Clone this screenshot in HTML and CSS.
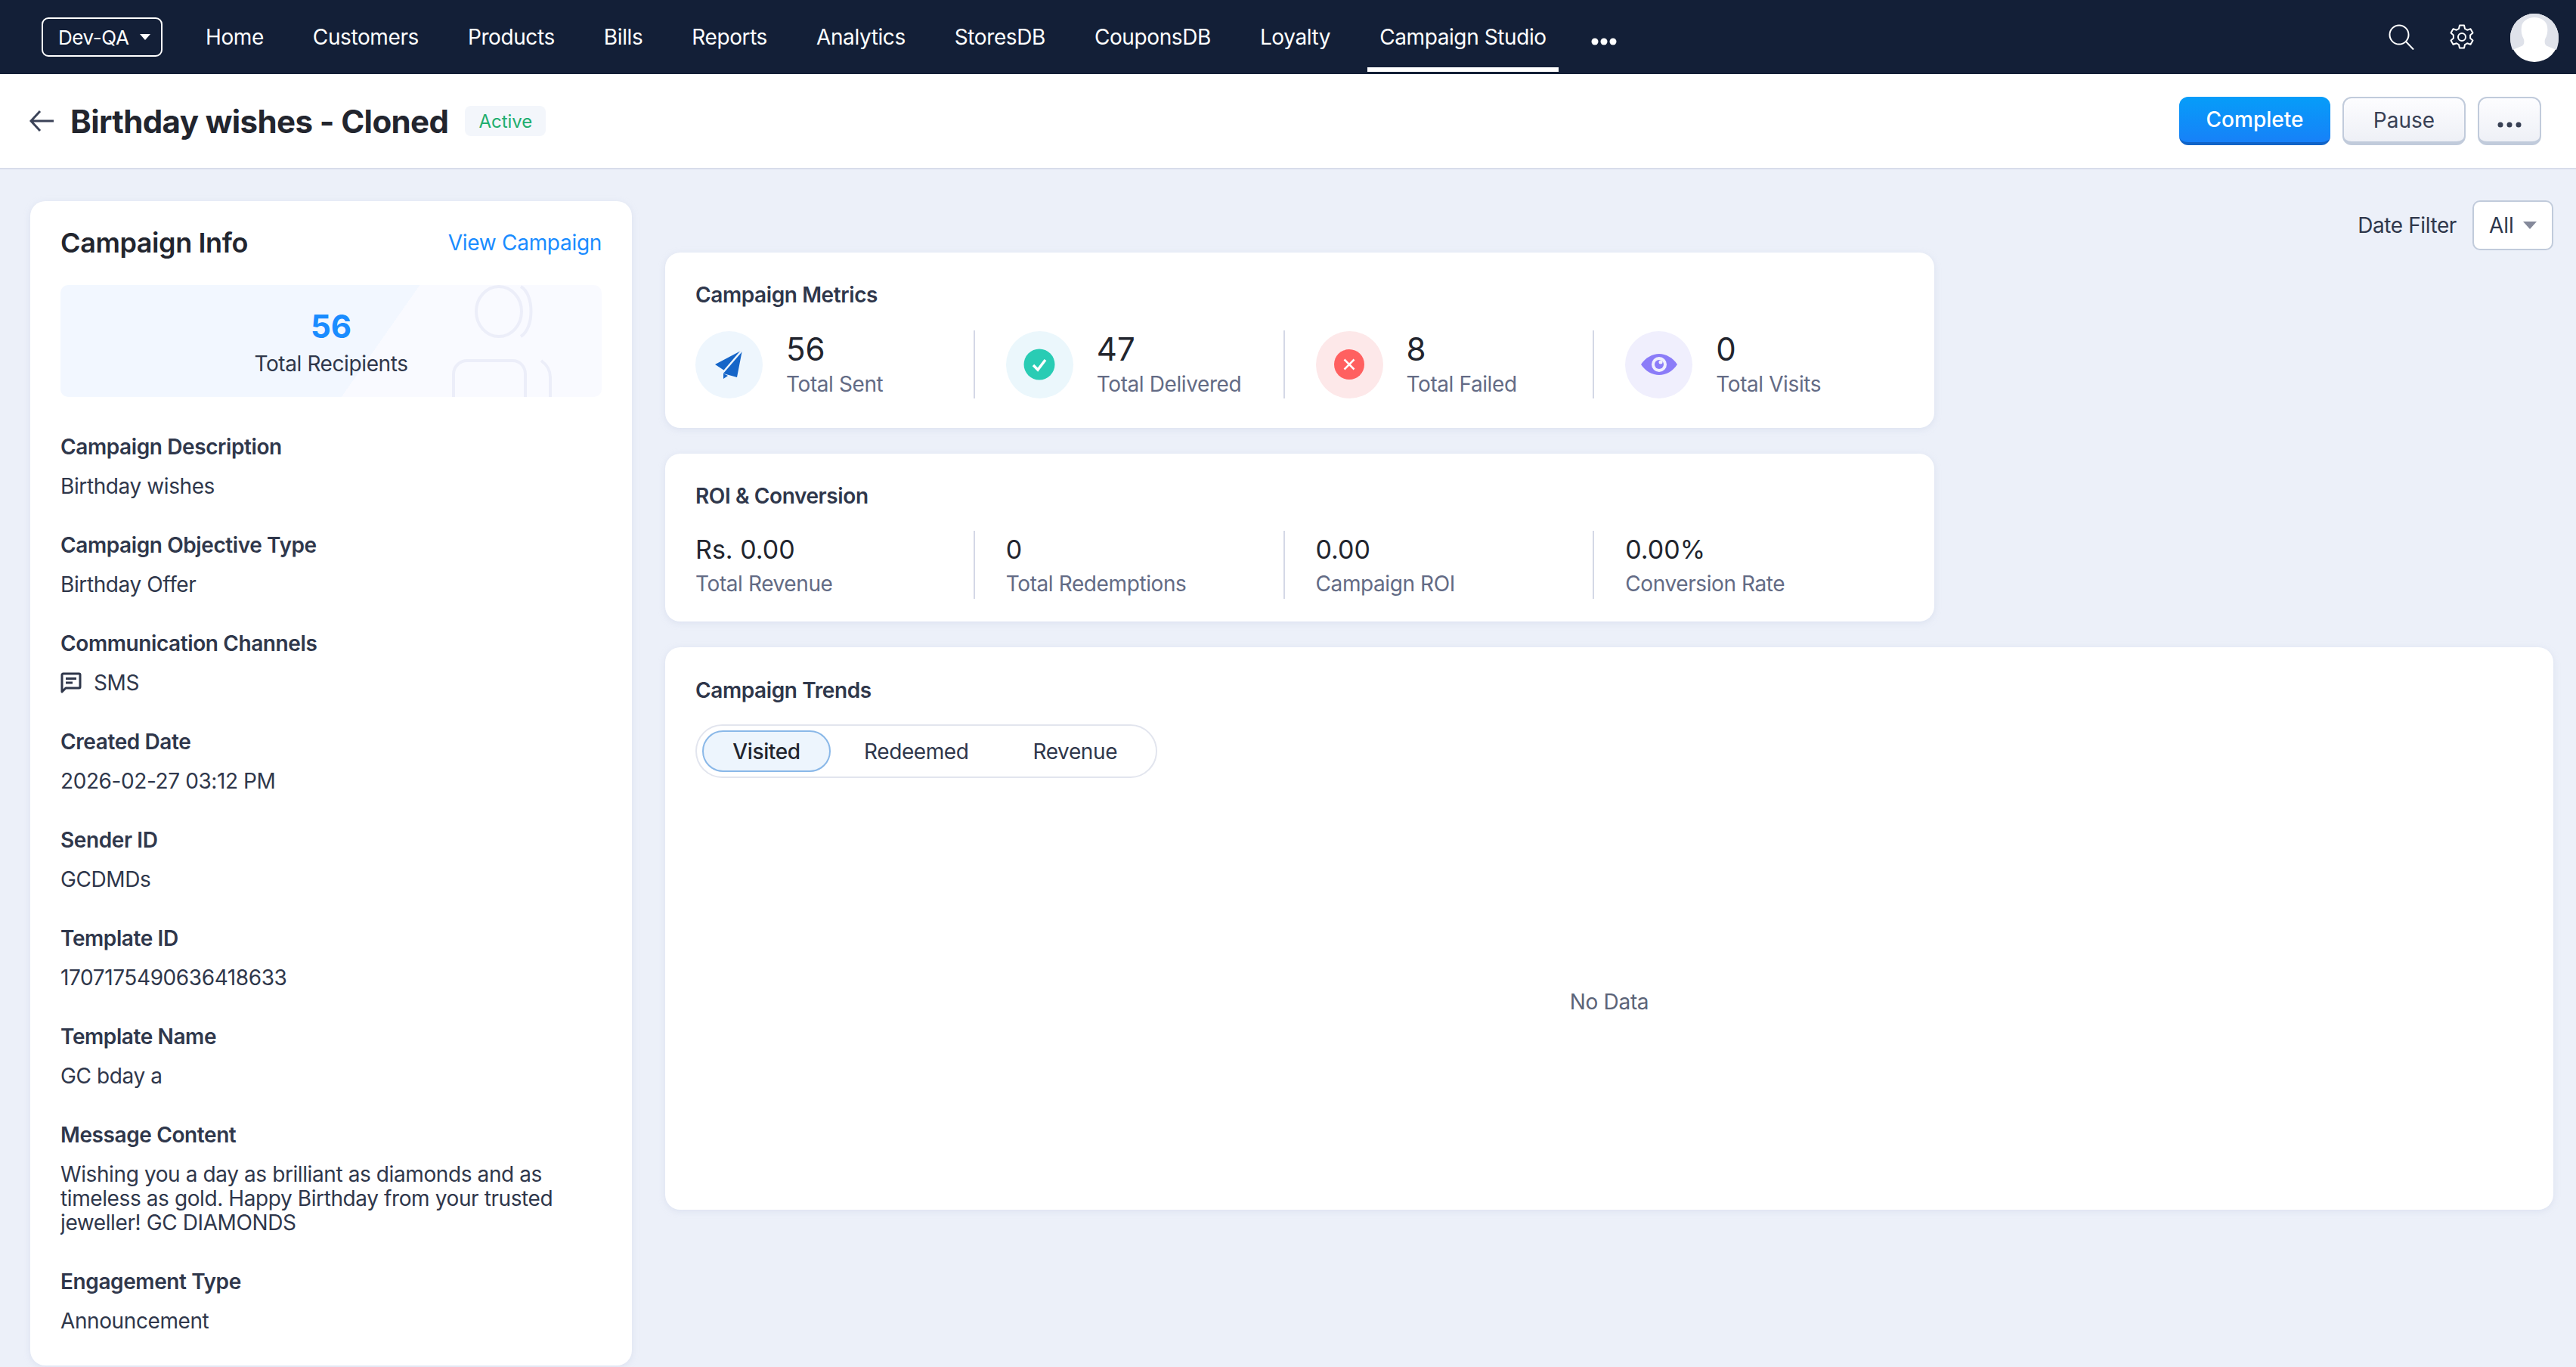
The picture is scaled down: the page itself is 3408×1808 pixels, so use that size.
FILE: index.html
```html
<!DOCTYPE html>
<html>
<head>
<meta charset="utf-8">
<title>Birthday wishes - Cloned</title>
<link rel="stylesheet" href="styles.css">
</head>
<body>
<nav class="topbar">
    <button class="org">Dev-QA <span class="org-caret"></span></button>
    <div class="nav-links">
        <a class="nav-item">Home</a>
        <a class="nav-item">Customers</a>
        <a class="nav-item">Products</a>
        <a class="nav-item">Bills</a>
        <a class="nav-item">Reports</a>
        <a class="nav-item">Analytics</a>
        <a class="nav-item">StoresDB</a>
        <a class="nav-item">CouponsDB</a>
        <a class="nav-item">Loyalty</a>
        <a class="nav-item active">Campaign Studio</a>
        <a class="nav-more">
            <svg width="34" height="10" viewBox="0 0 34 10"><circle cx="5" cy="5" r="4.5" fill="#fff"/><circle cx="17" cy="5" r="4.5" fill="#fff"/><circle cx="29" cy="5" r="4.5" fill="#fff"/></svg>
        </a>
    </div>
    <div class="top-icons">
        <svg class="ic-search" width="34" height="34" viewBox="0 0 34 34" fill="none" stroke="#fff" stroke-width="2"><circle cx="14" cy="14" r="12.5"/><path d="M23 23l10 10.500"/></svg>
        <svg class="ic-gear" width="32" height="34" viewBox="0 0 32 34" fill="none" stroke="#fff" stroke-width="2" stroke-linejoin="round"><path d="M13 1.500h6l1 4.500 3 1.700 4.500-1.400 3 5.200-3.400 3.100v3.800l3.400 3.100-3 5.200-4.500-1.400-3 1.700-1 4.500h-6l-1-4.500-3-1.700-4.500 1.400-3-5.200 3.400-3.100v-3.800l-3.400-3.100 3-5.200 4.500 1.400 3-1.700z"/><circle cx="16" cy="17" r="5"/></svg>
        <div class="avatar">
            <svg width="64" height="64" viewBox="0 0 64 64"><circle cx="32" cy="32" r="32" fill="#fff"/><path d="M0 32a32 32 0 0 1 64 0c0 6-1 11-3 16l-12-5c-3-1-4-5-3-9 3-5 4-11 3-17C48 10 41 5 32 5S16 10 15 17c-1 6 0 12 3 17 1 4 0 8-3 9L3 48C1 43 0 38 0 32z" fill="#dfe2ea"/></svg>
        </div>
    </div>
</nav>

<header class="pagehead">
    <svg class="back" width="32" height="30" viewBox="0 0 32 30" fill="none" stroke="#3b4358" stroke-width="3"><path d="M14 2L2 15l12 13M2 15h30"/></svg>
    <h1>Birthday wishes - Cloned</h1>
    <span class="badge">Active</span>
    <div class="actions">
        <button class="btn btn-primary">Complete</button>
        <button class="btn">Pause</button>
        <button class="btn btn-dots">
            <svg width="32" height="8" viewBox="0 0 32 8"><circle cx="4" cy="4" r="3.500" fill="#384054"/><circle cx="16" cy="4" r="3.500" fill="#384054"/><circle cx="28" cy="4" r="3.500" fill="#384054"/></svg>
        </button>
    </div>
</header>

<div class="content">
    <aside class="card info">
        <div class="info-head">
            <h2>Campaign Info</h2>
            <a class="link">View Campaign</a>
        </div>
        <div class="recipients">
            <svg class="recipients-art" width="200" height="150" viewBox="0 0 200 150" fill="none" stroke="#eceef9" stroke-width="4"><ellipse cx="99" cy="35" rx="30" ry="33"/><path d="M128 2c18 10 18 55 0 66"/><path d="M39 150v-32c0-10 8-18 18-18h60c10 0 17 8 17 18v32"/><path d="M155 100c8 6 12 12 12 22v28"/></svg>
            <div class="recipients-num">56</div>
            <div class="recipients-label">Total Recipients</div>
        </div>
        <div class="fields">
            <div class="field"><div class="field-label">Campaign Description</div><div class="field-value">Birthday wishes</div></div>
            <div class="field"><div class="field-label">Campaign Objective Type</div><div class="field-value">Birthday Offer</div></div>
            <div class="field">
                <div class="field-label">Communication Channels</div>
                <div class="field-value channel">
                    <svg width="28" height="28" viewBox="0 0 28 28" fill="none"><path d="M2 26V3.500C2 2.700 2.700 2 3.500 2h21c.8 0 1.500.7 1.500 1.500v16c0 .8-.7 1.500-1.500 1.500H7z" stroke="#2f374b" stroke-width="3" stroke-linejoin="round"/><path d="M7 8.500h14M7 14h9" stroke="#2f374b" stroke-width="3"/></svg>
                    SMS
                </div>
            </div>
            <div class="field"><div class="field-label">Created Date</div><div class="field-value">2026-02-27 03:12 PM</div></div>
            <div class="field"><div class="field-label">Sender ID</div><div class="field-value">GCDMDs</div></div>
            <div class="field"><div class="field-label">Template ID</div><div class="field-value">1707175490636418633</div></div>
            <div class="field"><div class="field-label">Template Name</div><div class="field-value">GC bday a</div></div>
            <div class="field"><div class="field-label">Message Content</div><div class="field-value">Wishing you a day as brilliant as diamonds and as timeless as gold. Happy Birthday from your trusted jeweller! GC DIAMONDS</div></div>
            <div class="field"><div class="field-label">Engagement Type</div><div class="field-value">Announcement</div></div>
        </div>
    </aside>

    <main class="right">
        <div class="filter">
            <span class="filter-label">Date Filter</span>
            <div class="select">All <span class="select-caret"></span></div>
        </div>

        <section class="card metrics">
            <h3>Campaign Metrics</h3>
            <div class="stat-row">
                <div class="stat">
                    <div class="stat-icon i-blue">
                        <svg width="37" height="38" viewBox="0 0 37 38"><path d="M36 0L0 19l13 8.500L11 31l18 5z" fill="#1565c8"/><path d="M11 31l6 3-6 4z" fill="#1565c8"/><path d="M36 0L11 29" stroke="#eef6fd" stroke-width="2.500" fill="none"/></svg>
                    </div>
                    <div><div class="stat-num">56</div><div class="stat-label">Total Sent</div></div>
                </div>
                <div class="stat">
                    <div class="stat-icon i-teal">
                        <svg width="42" height="42" viewBox="0 0 42 42"><circle cx="21" cy="21" r="20.500" fill="#29ccb4"/><path d="M13 22l6 6 10-13" stroke="#fff" stroke-width="3.500" fill="none"/></svg>
                    </div>
                    <div><div class="stat-num">47</div><div class="stat-label">Total Delivered</div></div>
                </div>
                <div class="stat">
                    <div class="stat-icon i-red">
                        <svg width="40" height="40" viewBox="0 0 40 40"><circle cx="20" cy="20" r="20" fill="#ff6060"/><path d="M13.500 13.500l13 13M26.500 13.500l-13 13" stroke="#fff" stroke-width="2.500"/></svg>
                    </div>
                    <div><div class="stat-num">8</div><div class="stat-label">Total Failed</div></div>
                </div>
                <div class="stat">
                    <div class="stat-icon i-purple">
                        <svg width="48" height="28" viewBox="0 0 48 28"><path d="M0 14C6 5 15 0 24 0s18 5 24 14c-6 9-15 14-24 14S6 23 0 14z" fill="#8b7cf8"/><circle cx="24" cy="14" r="10" fill="#f0effd"/><circle cx="24" cy="14" r="6" fill="#8b7cf8"/><circle cx="26" cy="11" r="2.500" fill="#f0effd"/></svg>
                    </div>
                    <div><div class="stat-num">0</div><div class="stat-label">Total Visits</div></div>
                </div>
            </div>
        </section>

        <section class="card roi">
            <h3>ROI &amp; Conversion</h3>
            <div class="stat-row">
                <div class="stat"><div><div class="stat-num small">Rs. 0.00</div><div class="stat-label">Total Revenue</div></div></div>
                <div class="stat"><div><div class="stat-num small">0</div><div class="stat-label">Total Redemptions</div></div></div>
                <div class="stat"><div><div class="stat-num small">0.00</div><div class="stat-label">Campaign ROI</div></div></div>
                <div class="stat"><div><div class="stat-num small">0.00%</div><div class="stat-label">Conversion Rate</div></div></div>
            </div>
        </section>

        <section class="card trends">
            <h3>Campaign Trends</h3>
            <div class="tabs">
                <span class="tab on">Visited</span>
                <span class="tab t2">Redeemed</span>
                <span class="tab t3">Revenue</span>
            </div>
            <div class="nodata">No Data</div>
        </section>
    </main>
</div>
</body>
</html>
```

FILE: styles.css
```css
* { box-sizing: border-box; }
html, body { margin: 0; padding: 0; }
body {
    width: 3408px;
    height: 1808px;
    overflow: hidden;
    background: #ecf0f9;
    font-family: Inter, "Noto Sans", sans-serif;
    color: #2f374b;
}
h1, h2, h3 { margin: 0; }
button { font-family: inherit; }

/* top bar */
.topbar {
    height: 98px;
    background: #131f37;
    display: flex;
    padding-left: 55px;
}
.org {
    width: 160px;
    height: 52px;
    margin-top: 23px;
    background: none;
    border: 2px solid #fff;
    border-radius: 9px;
    color: #fff;
    font-size: 26px;
    letter-spacing: -0.4px;
    display: flex;
    align-items: center;
    padding: 0 0 0 20px;
    gap: 14px;
}
.org-caret {
    border-top: 8px solid #fff;
    border-left: 7px solid transparent;
    border-right: 7px solid transparent;
}
.nav-links {
    display: flex;
    margin-left: 41px;
    gap: 33px;
}
.nav-item {
    height: 95px;
    padding: 8px 16px 0;
    border-bottom: 6px solid transparent;
    color: #fff;
    font-size: 28px;
    letter-spacing: -0.4px;
    display: flex;
    align-items: center;
}
.nav-item.active { border-bottom-color: #fff; }
.nav-more { display: flex; align-items: center; padding-top: 12px; margin-left: 10px; }
.top-icons {
    margin-left: auto;
    display: flex;
    align-items: center;
    padding-right: 23px;
}
.ic-search { margin-right: 47px; margin-top: -1px; }
.ic-gear { margin-right: 48px; margin-top: -1px; }
.avatar { height: 64px; margin-top: 1px; }

/* page header */
.pagehead {
    height: 126px;
    background: #fff;
    border-bottom: 2px solid #d8dcea;
    display: flex;
    align-items: center;
    padding: 0 46px 0 39px;
}
.back { margin-right: 22px; }
.pagehead h1 {
    font-size: 42px;
    font-weight: 700;
    letter-spacing: -0.6px;
    color: #22252e;
}
.badge {
    margin-left: 22px;
    height: 40px;
    padding: 0 18px;
    border-radius: 8px;
    background: #f3f6fb;
    color: #1fae6f;
    font-size: 24px;
    display: flex;
    align-items: center;
}
.actions { margin-left: auto; display: flex; gap: 16px; }
.btn {
    height: 64px;
    width: 163px;
    background: linear-gradient(#fdfdff, #eef0f6);
    border: 2px solid #c1cbdb;
    border-bottom-width: 5px;
    border-radius: 12px;
    color: #384054;
    font-size: 28px;
    padding: 0;
}
.btn-primary {
    width: 200px;
    background: linear-gradient(#069df9, #1781f8);
    border: 0;
    border-bottom: 4px solid #1064c8;
    color: #fff;
    font-weight: 500;
}
.btn-dots { width: 84px; }

/* layout */
.content {
    display: flex;
    align-items: flex-start;
    padding-left: 40px;
}
.card {
    background: #fff;
    border-radius: 20px;
    box-shadow: 0 2px 8px rgba(190, 198, 224, 0.35);
}

/* left panel */
.info {
    width: 796px;
    height: 1540px;
    margin-top: 42px;
    padding: 0 40px;
    flex-shrink: 0;
    display: flex;
    flex-direction: column;
}
.info-head {
    display: flex;
    justify-content: space-between;
    align-items: center;
    height: 112px;
}
.info-head h2 { font-size: 36px; font-weight: 600; letter-spacing: -0.4px; color: #22252e; }
.link { color: #1a8cff; font-size: 28px; letter-spacing: -0.3px; }
.recipients {
    position: relative;
    height: 150px;
    overflow: hidden;
    border-radius: 10px;
    background: linear-gradient(125deg, #f2f7ff 58%, #f9faff 58%);
    text-align: center;
    padding-top: 32px;
}
.recipients-art { position: absolute; right: 35px; top: 0; }
.recipients-num {
    position: relative;
    color: #1a8cff;
    font-size: 42px;
    font-weight: 700;
    line-height: 46px;
}
.recipients-label { position: relative; font-size: 28px; letter-spacing: -0.4px; margin-top: 8px; line-height: 36px; }
.fields {
    height: 1249px;
    overflow: hidden;
    margin-top: 48px;
    margin-bottom: 0;
}
.field { margin-bottom: 44px; }
.field-label { font-size: 28px; font-weight: 600; letter-spacing: -0.4px; line-height: 36px; }
.field-value { font-size: 28px; letter-spacing: -0.4px; line-height: 32px; margin-top: 18px; }
.channel { display: flex; align-items: center; gap: 16px; }

/* right side */
.right { margin-left: 44px; width: 2498px; padding-top: 41px; }
.filter {
    height: 66px;
    margin-bottom: 3px;
    display: flex;
    justify-content: flex-end;
    align-items: center;
    gap: 21px;
}
.filter-label { font-size: 28px; letter-spacing: -0.4px; }
.select {
    width: 107px;
    height: 66px;
    background: #fff;
    border: 2px solid #c1cbdb;
    border-radius: 10px;
    font-size: 28px;
    display: flex;
    align-items: center;
    padding-left: 20px;
    gap: 12px;
}
.select-caret {
    border-top: 10px solid #84899a;
    border-left: 9px solid transparent;
    border-right: 9px solid transparent;
}
.metrics, .roi { width: 1679px; padding: 0 40px; }
.metrics { height: 232px; }
.roi { height: 222px; margin-top: 34px; }
.card h3 { font-size: 28px; font-weight: 600; letter-spacing: -0.4px; line-height: 36px; }
.metrics h3 { padding-top: 38px; margin-bottom: 29px; }
.roi h3 { padding-top: 38px; margin-bottom: 28px; }
.stat-row { display: flex; }
.stat {
    width: 411px;
    padding-left: 41px;
    border-right: 2px solid #d4d8e6;
    display: flex;
    align-items: center;
    gap: 31px;
    height: 90px;
}
.stat:first-child { width: 371px; padding-left: 0; }
.stat:last-child { border-right: 0; }
.stat-icon {
    width: 89px;
    height: 89px;
    border-radius: 50%;
    flex-shrink: 0;
    display: flex;
    align-items: center;
    justify-content: center;
}
.i-blue { background: #eef6fd; }
.i-teal { background: #ebf7fc; }
.i-red { background: #fde8e9; }
.i-purple { background: #f0effd; }
.stat-num { font-size: 42px; line-height: 48px; color: #22252e; }
.stat-num.small { font-size: 34px; line-height: 46px; }
.stat-label { font-size: 28px; letter-spacing: -0.4px; color: #636b85; line-height: 36px; margin-top: 4px; }

.trends {
    height: 744px;
    margin-top: 34px;
    padding: 39px 40px 0;
    display: flex;
    flex-direction: column;
}
.tabs {
    margin-top: 27px;
    width: 611px;
    height: 71px;
    border: 2px solid #e2e5ee;
    border-radius: 36px;
    display: flex;
    align-items: center;
    padding-left: 7px;
    font-size: 28px;
    letter-spacing: -0.4px;
}
.tab { display: flex; align-items: center; }
.tab.on {
    width: 170px;
    height: 55px;
    justify-content: center;
    background: #edf5fd;
    border: 2px solid #8ab8e8;
    border-radius: 28px;
    font-weight: 500;
    color: #22252e;
}
.t2 { margin-left: 44px; }
.t3 { margin-left: 85px; }
.nodata {
    text-align: center;
    margin-top: 279px;
    font-size: 28px;
    letter-spacing: -0.3px;
    color: #5c6478;
}
```
